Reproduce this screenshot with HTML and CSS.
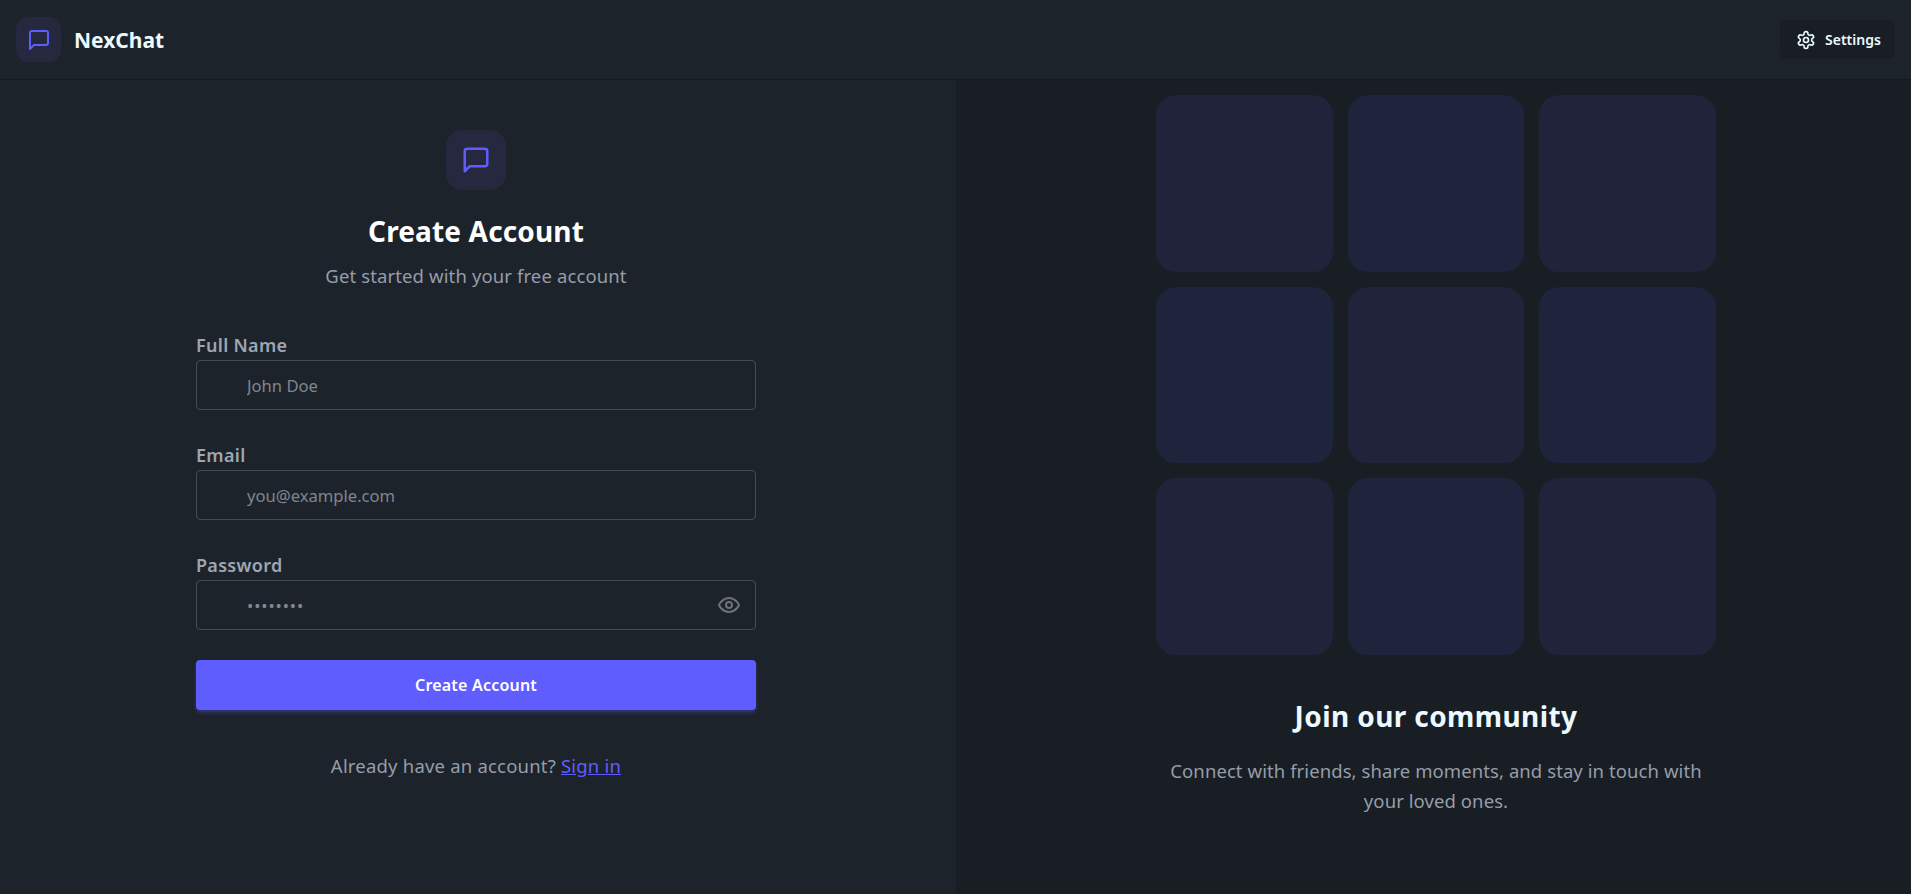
FILE: index.html
```html
<!DOCTYPE html>
<html lang="en">
<head>
<meta charset="utf-8">
<title>NexChat</title>
<link rel="stylesheet" href="styles.css">
</head>
<body>
<header class="topbar">
  <div class="brand">
    <span class="logo logo-sm">
      <svg width="24" height="24" viewBox="0 0 24 24" class="icon"><path d="M21 15a2 2 0 0 1-2 2H7l-4 4V5a2 2 0 0 1 2-2h14a2 2 0 0 1 2 2z"/></svg>
    </span>
    <span class="brand-name">NexChat</span>
  </div>
  <button class="settings" type="button">
    <svg width="20" height="20" viewBox="0 0 24 24" class="icon"><path d="M12.22 2h-.44a2 2 0 0 0-2 2v.18a2 2 0 0 1-1 1.73l-.43.25a2 2 0 0 1-2 0l-.15-.08a2 2 0 0 0-2.73.73l-.22.38a2 2 0 0 0 .73 2.73l.15.1a2 2 0 0 1 1 1.72v.51a2 2 0 0 1-1 1.74l-.15.09a2 2 0 0 0-.73 2.73l.22.38a2 2 0 0 0 2.73.73l.15-.08a2 2 0 0 1 2 0l.43.25a2 2 0 0 1 1 1.73V20a2 2 0 0 0 2 2h.44a2 2 0 0 0 2-2v-.18a2 2 0 0 1 1-1.73l.43-.25a2 2 0 0 1 2 0l.15.08a2 2 0 0 0 2.73-.73l.22-.39a2 2 0 0 0-.73-2.73l-.15-.08a2 2 0 0 1-1-1.74v-.5a2 2 0 0 1 1-1.74l.15-.09a2 2 0 0 0 .73-2.73l-.22-.38a2 2 0 0 0-2.73-.73l-.15.08a2 2 0 0 1-2 0l-.43-.25a2 2 0 0 1-1-1.73V4a2 2 0 0 0-2-2z"/><circle cx="12" cy="12" r="3"/></svg>
    <span>Settings</span>
  </button>
</header>
<main class="layout">
  <section class="form-panel">
    <div class="form-wrap">
      <div class="intro">
        <span class="logo logo-lg">
          <svg width="30" height="30" viewBox="0 0 24 24" class="icon"><path d="M21 15a2 2 0 0 1-2 2H7l-4 4V5a2 2 0 0 1 2-2h14a2 2 0 0 1 2 2z"/></svg>
        </span>
        <h1>Create Account</h1>
        <p class="muted">Get started with your free account</p>
      </div>
      <form class="form">
        <label class="field">
          <span class="label">Full Name</span>
          <input class="input" type="text" placeholder="John Doe">
        </label>
        <label class="field">
          <span class="label">Email</span>
          <input class="input" type="email" placeholder="you@example.com">
        </label>
        <label class="field">
          <span class="label">Password</span>
          <span class="input-wrap">
            <input class="input input-pass" type="password" placeholder="••••••••">
            <svg width="24" height="24" viewBox="0 0 24 24" class="icon eye"><path d="M2 12s3-7 10-7 10 7 10 7-3 7-10 7-10-7-10-7Z"/><circle cx="12" cy="12" r="3"/></svg>
          </span>
        </label>
        <button class="submit" type="button">Create Account</button>
      </form>
      <p class="signin">Already have an account? <a href="#">Sign in</a></p>
    </div>
  </section>
  <section class="promo-panel">
    <div class="promo">
      <div class="tiles">
        <div class="tile tile-a"></div><div class="tile tile-b"></div><div class="tile tile-a"></div>
        <div class="tile tile-b"></div><div class="tile tile-a"></div><div class="tile tile-b"></div>
        <div class="tile tile-a"></div><div class="tile tile-b"></div><div class="tile tile-a"></div>
      </div>
      <h2>Join our community</h2>
      <p class="promo-text">Connect with friends, share moments, and stay in touch with your loved ones.</p>
    </div>
  </section>
</main>
</body>
</html>
```
FILE: styles.css
```css
* { box-sizing: border-box; }
html, body { margin: 0; height: 100%; }
body {
  background: #1d232a;
  color: #ecf9ff;
  font-family: "Noto Sans", sans-serif;
  font-size: 16px;
  overflow: hidden;
}
.icon { fill: none; stroke: currentColor; stroke-width: 2; stroke-linecap: round; stroke-linejoin: round; display: block; }
.topbar {
  height: 80px;
  display: flex;
  align-items: center;
  justify-content: space-between;
  padding: 0 16px;
  border-bottom: 1px solid #15191e;
}
.brand { display: flex; align-items: center; gap: 13px; }
.logo { display: flex; align-items: center; justify-content: center; background: #25283f; color: #605dff; }
.logo-sm { width: 45px; height: 45px; border-radius: 12px; }
.logo-lg { width: 60px; height: 60px; border-radius: 16px; }
.brand-name { font-size: 21px; font-weight: 700; }
.settings {
  display: flex;
  align-items: center;
  gap: 9px;
  height: 39px;
  width: 115px;
  padding: 0 0 0 15px;
  background: #191e24;
  border: 1px solid #1a1f26;
  border-radius: 6px;
  color: #ecf9ff;
  font: 600 14px "Noto Sans", sans-serif;
}
.layout { display: grid; grid-template-columns: 956px 1fr; height: 814px; }
.form-panel { padding: 50px 0 0 196px; }
.form-wrap { width: 560px; }
.intro { display: flex; flex-direction: column; align-items: center; }
h1 { margin: 23px 0 0; font-size: 28px; line-height: 36px; font-weight: 700; letter-spacing: .15px; color: #fff; }
.muted { margin: 14px 0 0; font-size: 18.5px; line-height: 26px; letter-spacing: .12px; color: #959daa; }
.form { margin-top: 41px; display: flex; flex-direction: column; }
.field { display: flex; flex-direction: column; margin-bottom: 30px; }
.label { font-size: 18px; font-weight: 600; line-height: 31px; height: 30px; letter-spacing: .3px; color: #9ea6b3; }
.input-wrap { position: relative; display: block; }
.input {
  width: 100%;
  height: 50px;
  padding: 0 50px;
  background: #1d232a;
  border: 1px solid #474c54;
  border-radius: 4px;
  color: #ecf9ff;
  font: 400 16.6px "Noto Sans", sans-serif;
  outline: none;
}
.input-pass { letter-spacing: .9px; }
.input::placeholder { color: #80868f; opacity: 1; }
.eye { position: absolute; right: 15px; top: 13px; color: #6d727a; }
.submit {
  height: 50px;
  background: #605dff;
  border: 0;
  border-radius: 4px;
  color: #fff;
  font: 600 16px "Noto Sans", sans-serif;
  letter-spacing: .2px;
  box-shadow: 0 3px 5px -1px rgba(96, 93, 255, .45);
}
.signin { margin: 41px 0 0; text-align: center; font-size: 18.5px; line-height: 30px; letter-spacing: .2px; color: #959daa; }
.signin a { color: #605dff; }
.promo-panel { background: #191e24; padding: 15px 0 0 200px; }
.promo { width: 560px; text-align: center; }
.tiles { display: grid; grid-template-columns: repeat(3, 1fr); gap: 15px; }
.tile { border-radius: 20px; aspect-ratio: 1; }
.tile-a { background: #20233a; }
.tile-b { background: #1e243b; }
h2 { margin: 43px 0 0; font-size: 28px; line-height: 36px; font-weight: 700; letter-spacing: .4px; color: #ecf9ff; }
.promo-text { margin: 22px auto 0; width: 540px; font-size: 18.5px; line-height: 30px; letter-spacing: .08px; color: #959daa; }
```
